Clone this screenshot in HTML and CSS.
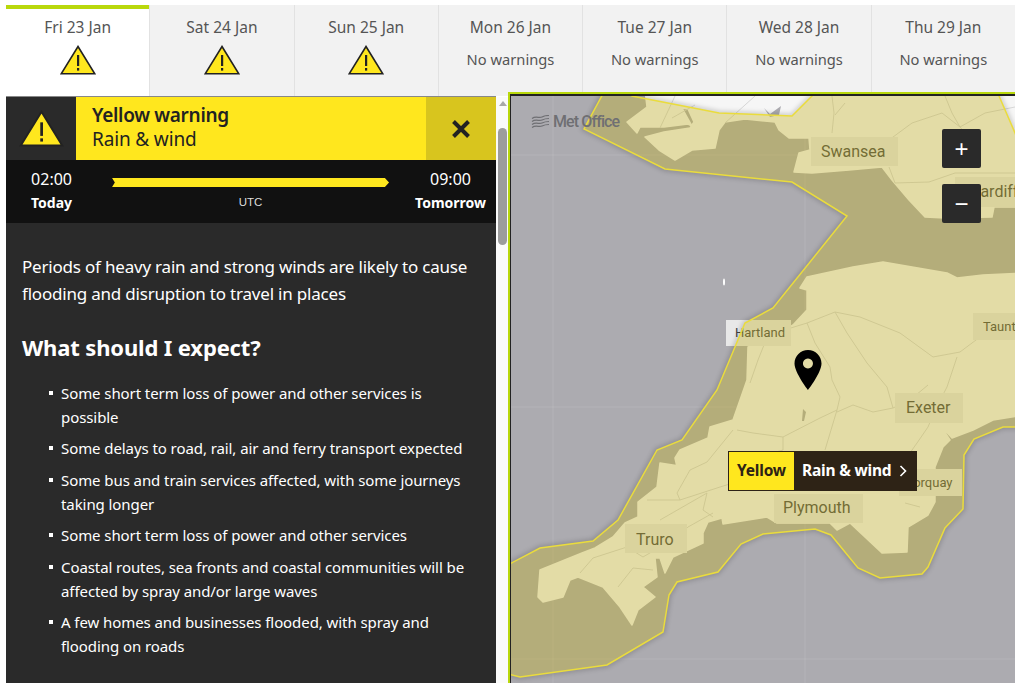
FILE: index.html
```html
<!DOCTYPE html>
<html lang="en">
<head>
  <meta charset="UTF-8" />
  <meta name="viewport" content="width=device-width, initial-scale=1" />
  <title>Weather warnings</title>
  <link rel="stylesheet" href="styles.css">
</head>
<body>

  <svg class="defs" aria-hidden="true">
    <symbol id="warnIcon" viewBox="0 0 36 30">
      <path d="M18 1.5 L34.8 28.8 H1.2 Z" fill="#ffe71e" stroke="#222" stroke-width="1.6" stroke-linejoin="miter"/>
      <rect x="17" y="10" width="2.2" height="11" fill="#222"/>
      <rect x="17" y="23" width="2.2" height="2.6" fill="#222"/>
    </symbol>
  </svg>

  <div class="page">
    <nav class="days">
      <div class="day active"><span>Fri 23 Jan</span><svg class="day-icon"><use href="#warnIcon"/></svg></div>
      <div class="day"><span>Sat 24 Jan</span><svg class="day-icon"><use href="#warnIcon"/></svg></div>
      <div class="day"><span>Sun 25 Jan</span><svg class="day-icon"><use href="#warnIcon"/></svg></div>
      <div class="day"><span>Mon 26 Jan</span><span class="none">No warnings</span></div>
      <div class="day"><span>Tue 27 Jan</span><span class="none">No warnings</span></div>
      <div class="day"><span>Wed 28 Jan</span><span class="none">No warnings</span></div>
      <div class="day"><span>Thu 29 Jan</span><span class="none">No warnings</span></div>
    </nav>

    <div class="content">
      <section class="panel">
        <header class="warn-head">
          <div class="warn-icon"><svg><use href="#warnIcon"/></svg></div>
          <div class="warn-title">
            <strong>Yellow warning</strong>
            <span>Rain &amp; wind</span>
          </div>
          <button class="warn-close" aria-label="Close">
            <svg viewBox="0 0 20 20" width="20" height="20"><path d="M2.5 2.5 L17.5 17.5 M17.5 2.5 L2.5 17.5" stroke="#222" stroke-width="4"/></svg>
          </button>
        </header>

        <div class="times">
          <div class="time"><span>02:00</span><strong>Today</strong></div>
          <div class="span-bar">
            <div class="arrow"></div>
            <small>UTC</small>
          </div>
          <div class="time"><span>09:00</span><strong>Tomorrow</strong></div>
        </div>

        <div class="details">
          <p>Periods of heavy rain and strong winds are likely to cause flooding and disruption to travel in places</p>
          <h2>What should I expect?</h2>
          <ul>
            <li>Some short term loss of power and other services is possible</li>
            <li>Some delays to road, rail, air and ferry transport expected</li>
            <li>Some bus and train services affected, with some journeys taking longer</li>
            <li>Some short term loss of power and other services</li>
            <li>Coastal routes, sea fronts and coastal communities will be affected by spray and/or large waves</li>
            <li>A few homes and businesses flooded, with spray and flooding on roads</li>
          </ul>
        </div>
      </section>

      <div class="scrollbar">
        <div class="scroll-up"></div>
        <div class="scroll-thumb"></div>
      </div>

      <section class="map">
        <div class="map-frame">
          <svg class="map-svg" viewBox="511 96 504 587">
            <defs>
              <!-- everything except the warning area, so its shadow only falls outside -->
              <clipPath id="outsideArea">
                <path clip-rule="evenodd" d="M500 90H1030V690H500Z M605 90 L584 129 L665 169 L792 182 L847 216 L773 308 L745 323 L717 390 L682 440 L657 450 L618 520 L593 541 L540 548 L500 569 L500 672 L520 677 L607 665 L663 632 L669 595 L677 582 L718 572 L741 544 L763 534 L815 529 L831 535 L858 568 L880 578 L922 574 L928 567 L945 528 L963 509 L964 455 L974 439 L1003 427 L1020 427 L1020 145 L1015 133 L999 96 L996 90 L818 90 L812 96 L792 116 L719 113 L632 96 L625 90 Z"/>
              </clipPath>
            </defs>
            <rect x="511" y="96" width="504" height="587" fill="#acabb0"/>
            <!-- graticule -->
            <path class="grid" d="M553 96V683 M805 96V683 M511 155H1015 M511 407H1015 M511 659H1015"/>
            <!-- south wales -->
            <path class="land" d="M645 90 L647 107 L627 122 L637 133 L640 127 L664 127 L688 124 L692 126 L682 108 L688 109 L694 122 L690 128 L664 132 L645 137 L659 150 L675 160 L692 150 L715 148 L719 130 L725 122 L745 119 L775 122 L779 130 L789 138 L809 138 L810 150 L799 153 L794 172 L812 173 L849 170 L882 167 L892 180 L909 200 L925 217 L945 218 L992 217 L994 207 L1025 207 L1025 90 Z"/>
            <!-- devon and cornwall -->
            <path class="land" d="M1025 273 L983 275 L957 278 L947 273 L883 262 L853 267 L807 277 L800 288 L807 290 L807 310 L793 325 L770 340 L748 347 L747 380 L733 420 L710 427 L708 438 L680 450 L675 458 L677 467 L692 468 L660 463 L657 487 L638 502 L638 517 L625 523 L613 537 L595 548 L582 553 L540 570 L538 597 L543 602 L563 597 L570 580 L578 577 L603 587 L620 607 L632 625 L638 610 L655 597 L643 587 L657 577 L655 558 L660 558 L665 573 L673 557 L703 543 L703 533 L708 522 L722 518 L723 524 L767 517 L777 523 L830 523 L837 530 L850 523 L882 553 L907 552 L908 527 L928 515 L935 502 L935 467 L943 447 L950 440 L940 425 L952 438 L973 430 L993 420 L1025 415 Z"/>
            <path class="inlet" d="M764 108 L770 114 L781 106 L779 115 L770 117 Z M803 409 L806 412 L804 421 L802 421 Z"/>
            <ellipse cx="724" cy="282" rx="1" ry="3.5" fill="#fff"/>
            <!-- roads -->
            <path class="road" d="M675 96 L660 128 M695 105 L672 118 M755 96 L725 123 M832 96 L834 113 L832 133 M845 103 L835 115 M945 96 L952 113 L960 127 L969 137 M889 140 L912 123 L942 113 L960 127 L985 113 L1015 107 M889 167 L895 183 L929 182 L955 173 L1015 173"/>
            <path class="road" d="M807 323 L815 343 L830 367 L832 380 L840 397 L837 410 L825 450 M835 312 L847 333 L867 363 L887 387 L893 408 M837 412 L853 405 L873 412 L893 408 L910 400 L928 385 M750 383 L758 360 L768 335 L807 323 L835 312 L860 317 L900 333 L933 357 L960 352 L980 337 L1015 330 M957 357 L947 387 L935 410 L928 427 L917 443 L905 460 M737 430 L753 433 L783 437 L820 418 L837 410 M733 430 L707 462 L690 470 L677 493 L680 500 L647 500 M680 500 L720 487 L733 483 L755 458 L783 450 L783 437 M660 520 L707 493 L703 510 L713 517 M580 573 L593 558 L627 547 L643 557 L677 537 L688 527 L713 513 M618 587 L633 568 L653 570 M905 503 L920 507"/>
            <!-- place labels sit under the warning tint -->
            <rect class="label" x="811" y="137" width="87" height="29"/>
            <text class="place" x="821" y="157">Swansea</text>
            <rect class="label" x="955" y="177" width="70" height="30"/>
            <text class="place" x="970" y="197">Cardiff</text>
            <rect class="label" x="973" y="313" width="60" height="27"/>
            <text class="place small" x="983" y="331">Taunton</text>
            <rect class="label" x="726" y="320" width="65" height="26"/>
            <text class="place small" x="735" y="337">Hartland</text>
            <rect class="label" x="895" y="393" width="68" height="30"/>
            <text class="place" x="906" y="413">Exeter</text>
            <rect class="label" x="899" y="469" width="63" height="27"/>
            <text class="place small" x="906" y="487">Torquay</text>
            <rect class="label" x="774" y="494" width="89" height="29"/>
            <text class="place" x="783" y="513">Plymouth</text>
            <rect class="label" x="625" y="524" width="62" height="29"/>
            <text class="place" x="636" y="545">Truro</text>
            <!-- warning area -->
            <g clip-path="url(#outsideArea)">
              <path class="area-shadow" d="M605 90 L584 129 L665 169 L792 182 L847 216 L773 308 L745 323 L717 390 L682 440 L657 450 L618 520 L593 541 L540 548 L500 569 L500 672 L520 677 L607 665 L663 632 L669 595 L677 582 L718 572 L741 544 L763 534 L815 529 L831 535 L858 568 L880 578 L922 574 L928 567 L945 528 L963 509 L964 455 L974 439 L1003 427 L1020 427 L1020 145 L1015 133 L999 96 L996 90 L818 90 L812 96 L792 116 L719 113 L632 96 L625 90 Z"/>
            </g>
            <path class="area" d="M605 90 L584 129 L665 169 L792 182 L847 216 L773 308 L745 323 L717 390 L682 440 L657 450 L618 520 L593 541 L540 548 L500 569 L500 672 L520 677 L607 665 L663 632 L669 595 L677 582 L718 572 L741 544 L763 534 L815 529 L831 535 L858 568 L880 578 L922 574 L928 567 L945 528 L963 509 L964 455 L974 439 L1003 427 L1020 427 L1020 145 L1015 133 L999 96 L996 90 L818 90 L812 96 L792 116 L719 113 L632 96 L625 90 Z"/>
            <path class="pin" d="M808 350 C800.500 350 794.500 356 794.500 363.500 C794.500 372.500 808 390 808 390 S821.500 372.500 821.500 363.500 C821.500 356 815.500 350 808 350 Z M808 358.500 A5 5 0 1 1 807.900 358.500 Z"/>
          </svg>

          <div class="brand">
            <svg viewBox="0 0 19 13" width="19" height="13"><path d="M1 3.500 C5 .500 8 3.500 11 2 S16 .500 18 .500 M1 6.500 C5 3.500 8 6.500 11 5 S16 3.500 18 3.500 M1 9.500 C5 6.500 8 9.500 11 8 S16 6.500 18 6.500 M1 12.500 C5 9.500 8 12.500 11 11 S16 9.500 18 9.500" fill="none" stroke="#6f6f73" stroke-width="1.200"/></svg>
            <span>Met Office</span>
          </div>

          <div class="zoom-btns">
            <button aria-label="Zoom in">+</button>
            <button aria-label="Zoom out">&minus;</button>
          </div>

          <div class="badge">
            <span class="badge-level">Yellow</span>
            <span class="badge-text">Rain &amp; wind
              <svg viewBox="0 0 8 12" width="8" height="12"><path d="M1.500 1 L6.500 6 L1.500 11" fill="none" stroke="#fff" stroke-width="1.600"/></svg>
            </span>
          </div>
        </div>
      </section>
    </div>
  </div>

</body>
</html>
```

FILE: styles.css
```css
body {
  margin: 0;
  font-family: 'Noto Sans', 'Open Sans', sans-serif;
  background: #fff;
  color: #222;
}

.defs {
  position: absolute;
  width: 0;
  height: 0;
}

.page {
  height: 683px;
  padding: 5px 9px 0 6px;
  box-sizing: border-box;
  display: flex;
  flex-direction: column;
  overflow: hidden;
}

/* day tabs */
.days {
  display: flex;
  height: 91px;
  flex-shrink: 0;
}

.day {
  flex: 1;
  display: flex;
  flex-direction: column;
  align-items: center;
  box-sizing: border-box;
  padding-top: 12px;
  background: #f2f2f2;
  border-left: 1px solid #e2e2e2;
  color: #555;
  font-size: 15.500px;
  line-height: 20px;
}

.day:first-child {
  border-left: 0;
}

.day.active {
  background: #fff;
  border-top: 4px solid #b9d80c;
  padding-top: 8px;
}

.day .none {
  margin-top: 12px;
  font-size: 14.700px;
}

.day-icon {
  width: 36px;
  height: 30px;
  margin-top: 8px;
}

.content {
  flex: 1;
  display: flex;
  min-height: 0;
}

/* left panel */
.panel {
  width: 490px;
  flex-shrink: 0;
  background: #2a2a2a;
  color: #fff;
  border-top: 1px solid #888;
  overflow: hidden;
}

.warn-head {
  display: flex;
  height: 63px;
}

.warn-icon {
  width: 70px;
  background: #2a2a2a;
  display: flex;
  align-items: center;
  justify-content: center;
}

.warn-icon svg {
  width: 45px;
  height: 37px;
}

.warn-title {
  flex: 1;
  background: #ffe71e;
  color: #222;
  padding: 6px 16px;
  font-size: 19px;
  line-height: 24px;
  display: flex;
  flex-direction: column;
}

.warn-title strong {
  font-weight: 600;
  letter-spacing: -0.300px;
}

.warn-title span {
  letter-spacing: -0.150px;
}

.warn-close {
  width: 70px;
  border: 0;
  padding: 0;
  background: #d8c51e;
  display: flex;
  align-items: center;
  justify-content: center;
}

.times {
  height: 63px;
  background: #111;
  box-sizing: border-box;
  padding: 7px 10px 0 25px;
  display: flex;
  align-items: flex-start;
}

.time {
  display: flex;
  flex-direction: column;
  align-items: center;
  font-size: 14px;
  line-height: 24px;
}

.time span {
  font-size: 16px;
}

.span-bar {
  flex: 1;
  margin: 11px 26px 0 40px;
  display: flex;
  flex-direction: column;
  align-items: center;
}

.arrow {
  width: 100%;
  height: 9px;
  background: #ffe71e;
  clip-path: polygon(0 0, 98.500% 0, 100% 50%, 98.500% 100%, 0 100%, 1% 50%);
}

.span-bar small {
  margin-top: 7px;
  font-family: 'Liberation Sans', sans-serif;
  font-size: 11.500px;
  line-height: 16px;
  color: #ddd;
}

.details {
  padding: 0 16px;
}

.details p {
  margin: 30px 0 0;
  font-size: 17px;
  line-height: 27px;
  letter-spacing: -0.200px;
}

.details h2 {
  margin: 25px 0 0;
  font-size: 22px;
  line-height: 30px;
  font-weight: 700;
  letter-spacing: -0.150px;
}

.details ul {
  list-style: none;
  margin: 19px 0 0;
  padding: 0 0 0 39px;
}

.details li {
  position: relative;
  font-size: 15px;
  line-height: 24px;
  margin-bottom: 7.400px;
  letter-spacing: -0.080px;
}

.details li::before {
  content: "";
  position: absolute;
  left: -12px;
  top: 10px;
  width: 4px;
  height: 4px;
  background: #fff;
}

/* fake scrollbar */
.scrollbar {
  width: 12px;
  flex-shrink: 0;
  margin-top: 1px;
  background: #fafafa;
  padding: 0 1px 0 2px;
  box-sizing: border-box;
}

.scroll-up {
  width: 0;
  margin: 4px auto 0;
  border-left: 4px solid transparent;
  border-right: 4px solid transparent;
  border-bottom: 5px solid #a8a8a8;
}

.scroll-thumb {
  height: 117px;
  margin-top: 22px;
  background: #9c9c9c;
  border-radius: 5px;
}

/* map */
.map {
  flex: 1;
  margin-top: -4px;
  border-top: 2px solid #b9d80c;
  border-left: 2px solid #b9d80c;
  position: relative;
  z-index: 1;
  min-width: 0;
}

.map-frame {
  position: relative;
  box-sizing: border-box;
  height: 100%;
  border-top: 2px solid #222;
  border-left: 1px solid #222;
  overflow: hidden;
}

.map-svg {
  display: block;
  width: 504px;
  height: 587px;
}

.grid {
  stroke: #fff;
  stroke-opacity: 0.1;
  fill: none;
}

.land {
  fill: #f6f6f6;
  stroke: #f6f6f6;
  stroke-width: 1.500;
  stroke-linejoin: round;
}

.inlet {
  fill: #acabb0;
}

.road {
  fill: none;
  stroke: #d2d2d2;
  stroke-width: 0.900;
  stroke-linejoin: round;
}

.label {
  fill: #e8e8e8;
}

.place {
  font-family: Roboto, sans-serif;
  font-size: 16px;
  fill: #444;
}

.place.small {
  font-size: 13px;
}

.area-shadow {
  fill: none;
  stroke: #000;
  stroke-width: 5;
  stroke-opacity: 0.160;
  filter: blur(2px);
}

.area {
  fill: #c4b01e;
  fill-opacity: 0.37;
  stroke: #eadc3c;
  stroke-width: 1.500;
}

.pin {
  fill: #000;
  fill-rule: evenodd;
}

.brand {
  position: absolute;
  left: 20px;
  top: 16px;
  display: flex;
  align-items: center;
  gap: 3px;
  font-family: Roboto, sans-serif;
  font-size: 16px;
  font-weight: 500;
  letter-spacing: -0.900px;
  color: #6f6f73;
}

.zoom-btns {
  position: absolute;
  left: 431px;
  top: 33px;
  display: flex;
  flex-direction: column;
  gap: 16px;
}

.zoom-btns button {
  width: 39px;
  height: 39px;
  padding: 0;
  border: 0;
  border-radius: 2px;
  background: #2a2a2a;
  color: #fff;
  font-family: 'Liberation Sans', sans-serif;
  font-size: 24px;
  line-height: 39px;
}

.badge {
  position: absolute;
  left: 217px;
  top: 355px;
  height: 40px;
  display: flex;
  box-sizing: border-box;
  border: 1px solid #2e2316;
  font-size: 15.500px;
  font-weight: 700;
  line-height: 36px;
  letter-spacing: -0.200px;
}

.badge-level {
  width: 65px;
  text-align: center;
  background: #ffe71e;
  color: #2e2316;
}

.badge-text {
  width: 122px;
  box-sizing: border-box;
  padding-left: 8px;
  background: #2e2316;
  color: #fff;
  white-space: nowrap;
}

.badge-text svg {
  margin-left: 4px;
  vertical-align: -1px;
}
```
